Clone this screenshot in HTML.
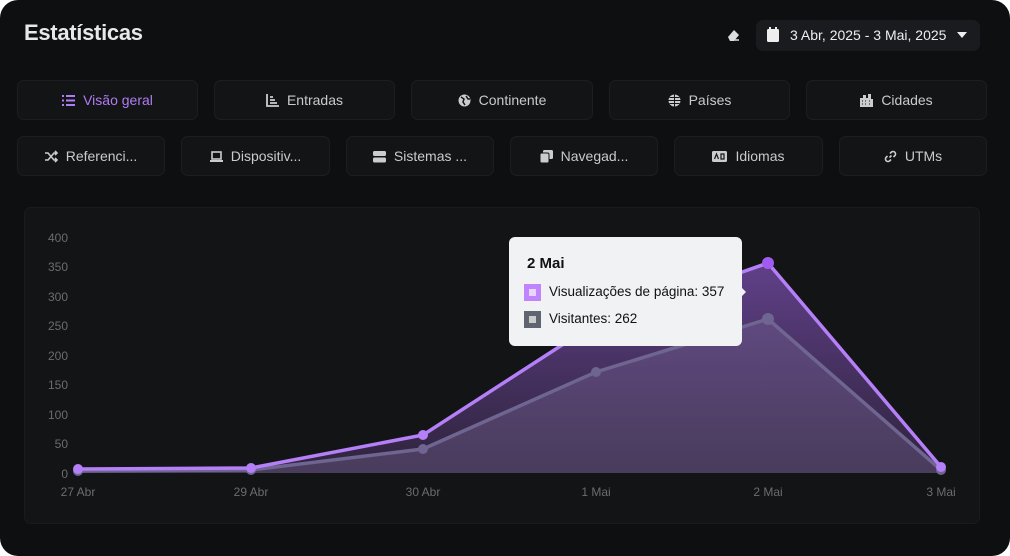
<!DOCTYPE html>
<html><head><meta charset="utf-8"><style>
*{box-sizing:border-box;margin:0;padding:0}
html,body{width:1010px;height:556px;background:#fff;overflow:hidden}
body{font-family:"Liberation Sans",sans-serif}
.wrap{position:absolute;left:0;top:0;width:1010px;height:556px;background:#0e0f11;border-radius:18px;}
h1{position:absolute;left:24px;top:20px;font-size:22px;color:#e8e8ea;font-weight:700;letter-spacing:-0.3px}
.date{position:absolute;left:756px;top:20px;width:224px;height:31px;background:#1a1b1f;border-radius:7px;color:#eee;font-size:14px;line-height:31px;padding-left:34px}
.btn{position:absolute;height:40px;background:#131416;border:1px solid #1d1e22;border-radius:7px;color:#c9cacc;font-size:14px;display:flex;align-items:center;justify-content:center;gap:8px}
.btn svg{width:13px;height:13px}
.card{position:absolute;left:24px;top:207px;width:956px;height:317px;background:#131416;border:1px solid #1a1b1e;border-radius:7px}
.tip{position:absolute;left:509px;top:237px;width:233px;height:109px;background:#f1f2f4;border-radius:6px;color:#111;font-size:13.5px}
</style></head><body><div class="wrap">
<h1>Estatísticas</h1>
<svg style="position:absolute;left:726px;top:28px" width="15" height="14" viewBox="0 0 15 14"><path d="M2 9l6-7 5 5-5 6H4z" fill="#ddd"/><path d="M4 12h9" stroke="#ddd" stroke-width="1.5"/></svg>
<div class="date">3 Abr, 2025 - 3 Mai, 2025</div>
<svg style="position:absolute;left:767px;top:27px" width="12" height="15" viewBox="0 0 12 15"><rect x="0" y="2" width="12" height="13" rx="1.5" fill="#eee"/><rect x="2" y="0" width="2" height="4" fill="#eee"/><rect x="8" y="0" width="2" height="4" fill="#eee"/></svg>
<svg style="position:absolute;left:957px;top:32px" width="10" height="7"><path d="M0 0h10L5 6z" fill="#eee"/></svg>

<div class="btn" style="left:17px;top:80px;width:181px;color:#b07cf5"><svg viewBox="0 0 13 13"><path d="M0 2h2M4 2h9M0 6.5h2M4 6.5h9M0 11h2M4 11h9" stroke="#b07cf5" stroke-width="2"/></svg>Visão geral</div>
<div class="btn" style="left:214px;top:80px;width:181px"><svg viewBox="0 0 13 13"><path d="M1 0v12h12M4 9h7M4 6h5M4 3h3" stroke="#ccc" stroke-width="1.8" fill="none"/></svg>Entradas</div>
<div class="btn" style="left:411px;top:80px;width:182px"><svg viewBox="0 0 13 13"><circle cx="6.5" cy="6.5" r="6" fill="#ccc"/><path d="M3 3l3 2-1 3 2 3M8 2l2 3 2 0" stroke="#131416" stroke-width="1.5" fill="none"/></svg>Continente</div>
<div class="btn" style="left:609px;top:80px;width:181px"><svg viewBox="0 0 13 13"><circle cx="6.5" cy="6.5" r="6" fill="#ccc"/><path d="M0.5 6.5h12M6.5 0.5v12M1.5 3.5h10M1.5 9.5h10" stroke="#131416" stroke-width="1"/></svg>Países</div>
<div class="btn" style="left:806px;top:80px;width:181px"><svg viewBox="0 0 13 13"><path d="M0 13V4h3V1h3v3h2V0h3v5h2v8z" fill="#ccc"/><path d="M2 7h1M5 7h1M9 7h1M2 10h1M5 10h1M9 10h1" stroke="#131416"/></svg>Cidades</div>

<div class="btn" style="left:17px;top:136px;width:148px"><svg viewBox="0 0 13 13"><path d="M0 3h3l6 7h3M0 10h3l6-7h3M10 1l2 2-2 2M10 8l2 2-2 2" stroke="#ccc" stroke-width="1.6" fill="none"/></svg>Referenci...</div>
<div class="btn" style="left:181px;top:136px;width:149px"><svg viewBox="0 0 13 13"><rect x="2" y="2" width="9" height="7" stroke="#ccc" stroke-width="1.6" fill="none"/><path d="M0 11h13" stroke="#ccc" stroke-width="2"/></svg>Dispositiv...</div>
<div class="btn" style="left:346px;top:136px;width:148px"><svg viewBox="0 0 13 13"><rect x="0" y="1" width="13" height="5" rx="1.5" fill="#ccc"/><rect x="0" y="7.5" width="13" height="5" rx="1.5" fill="#ccc"/></svg>Sistemas ...</div>
<div class="btn" style="left:510px;top:136px;width:148px"><svg viewBox="0 0 13 13"><rect x="3" y="0" width="10" height="9" rx="1.5" fill="#ccc"/><rect x="0" y="3" width="9" height="10" rx="1.5" fill="#ccc" stroke="#131416"/></svg>Navegad...</div>
<div class="btn" style="left:674px;top:136px;width:149px"><svg viewBox="0 0 15 13" style="width:15px"><rect x="0" y="1" width="15" height="11" rx="1.5" fill="#ccc"/><path d="M2.5 9l2-5 2 5M9 4h3v5H9z" stroke="#131416" stroke-width="1.2" fill="none"/></svg>Idiomas</div>
<div class="btn" style="left:839px;top:136px;width:148px"><svg viewBox="0 0 13 13"><path d="M5.5 7.5l2-2M6 3.5l1.5-1.5a2.5 2.5 0 0 1 3.5 3.5L9.5 7M7 9.5l-1.5 1.5A2.5 2.5 0 0 1 2 7.5L3.5 6" stroke="#ccc" stroke-width="1.6" fill="none"/></svg>UTMs</div>

<div class="card"></div>
<svg style="position:absolute;left:0;top:0" width="1010" height="556">
<defs><linearGradient id="g" x1="0" y1="0" x2="0" y2="1"><stop offset="0" stop-color="#7a4fb0" stop-opacity=".75"/><stop offset="1" stop-color="#3a2a4c" stop-opacity=".7"/></linearGradient></defs>
<g font-family="Liberation Sans" font-size="12" fill="#6b6c70" text-anchor="end">
<text x="68" y="242">400</text><text x="68" y="271">350</text><text x="68" y="301">300</text><text x="68" y="330">250</text><text x="68" y="360">200</text><text x="68" y="389">150</text><text x="68" y="419">100</text><text x="68" y="448">50</text><text x="68" y="478">0</text>
</g>
<g font-family="Liberation Sans" font-size="12" fill="#6b6c70" text-anchor="middle">
<text x="78" y="496">27 Abr</text><text x="251" y="496">29 Abr</text><text x="423" y="496">30 Abr</text><text x="596" y="496">1 Mai</text><text x="768" y="496">2 Mai</text><text x="941" y="496">3 Mai</text>
</g>
<path d="M78 469L251 468L423 435L596 323L768 263L941 467L941 473L78 473Z" fill="url(#g)"/>
<path d="M78 471L251 470L423 449L596 372L768 319L941 470L941 473L78 473Z" fill="#7a6a98" fill-opacity=".35"/>
<path d="M78 471L251 470L423 449L596 372L768 319L941 470" stroke="#6e6590" stroke-width="3.5" fill="none"/>
<g fill="#6e6590"><circle cx="78" cy="471" r="5"/><circle cx="251" cy="470" r="5"/><circle cx="423" cy="449" r="5"/><circle cx="596" cy="372" r="5"/><circle cx="768" cy="319" r="6"/><circle cx="941" cy="470" r="5"/></g>
<path d="M78 469L251 468L423 435L596 323L768 263L941 467" stroke="#b57ff8" stroke-width="3.5" fill="none"/>
<g fill="#b57ff8"><circle cx="78" cy="469" r="5"/><circle cx="251" cy="468" r="5"/><circle cx="423" cy="435" r="5"/><circle cx="768" cy="263" r="6" fill="#a05cf0"/><circle cx="941" cy="467" r="5"/></g>
</svg>
<div class="tip">
<div style="position:absolute;left:18px;top:18px;font-weight:700;font-size:15px">2 Mai</div>
<div style="position:absolute;left:15px;top:47px;width:17px;height:17px;background:#c084fc"><div style="margin:5px;width:7px;height:7px;background:#e9d5ff"></div></div>
<div style="position:absolute;left:40px;top:47px">Visualizações de página: 357</div>
<div style="position:absolute;left:15px;top:74px;width:17px;height:17px;background:#5f6470"><div style="margin:5px;width:7px;height:7px;background:#ccc"></div></div>
<div style="position:absolute;left:40px;top:74px">Visitantes: 262</div>
<div style="position:absolute;left:231px;top:49px;width:0;height:0;border-top:6px solid transparent;border-bottom:6px solid transparent;border-left:6px solid #f1f2f4"></div>
</div>
</div></body></html>
